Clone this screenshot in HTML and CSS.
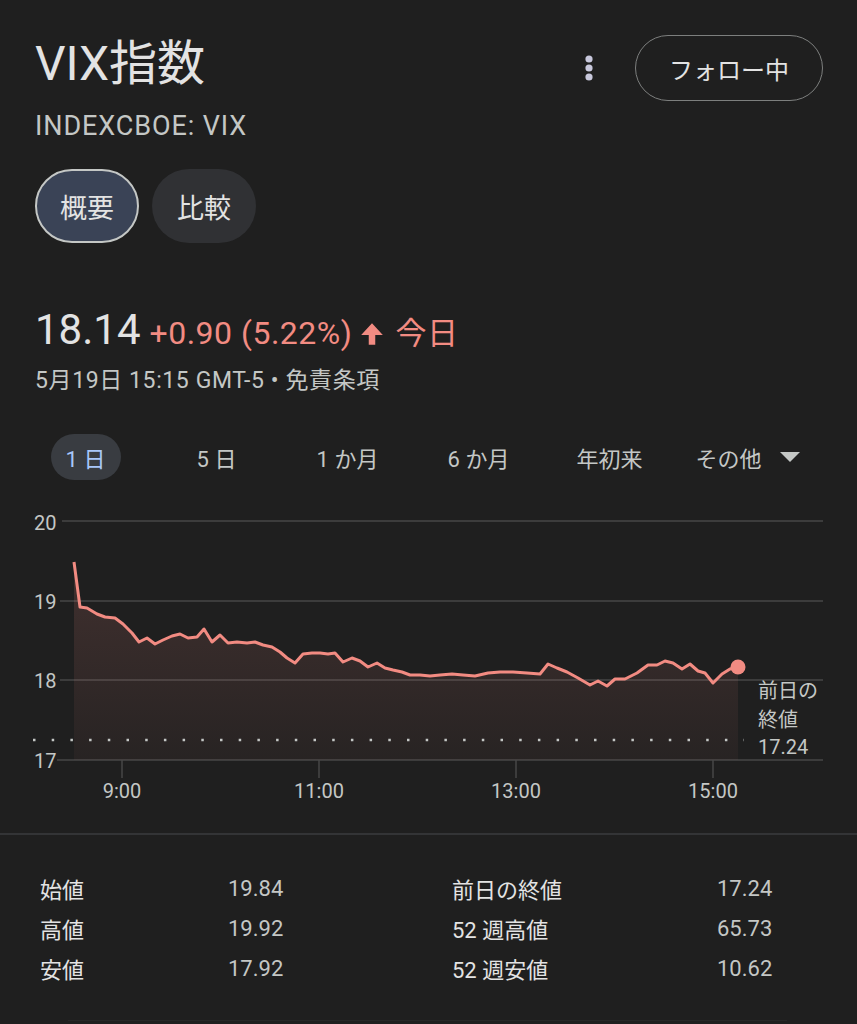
FILE: index.html
```html
<!DOCTYPE html>
<html lang="ja">

<head>
    <meta charset="UTF-8">
    <meta name="viewport" content="width=device-width, initial-scale=1.0">
    <title>VIX指数</title>
    <link rel="stylesheet" href="styles.css">
</head>

<body>
    <header class="quote-head">
        <div class="top-row">
            <h1>VIX指数</h1>
            <div class="actions">
                <button class="more" aria-label="その他のオプション">
                    <svg width="8" height="26" viewBox="0 0 8 26">
                        <circle cx="4" cy="4" r="3.6" />
                        <circle cx="4" cy="13" r="3.6" />
                        <circle cx="4" cy="22" r="3.6" />
                    </svg>
                </button>
                <button class="follow">フォロー中</button>
            </div>
        </div>
        <p class="ticker">INDEXCBOE: VIX</p>
        <div class="chips">
            <button class="chip chip-active">概要</button>
            <button class="chip">比較</button>
        </div>

        <div class="price-row">
            <span class="price">18.14</span>
            <span class="change">+0.90 (5.22%)</span>
            <svg class="up-arrow" width="26" height="26" viewBox="0 0 24 24">
                <path d="M12 2 L22 13 L15 13 L15 22 L9 22 L9 13 L2 13 Z" />
            </svg>
            <span class="change today">今日</span>
        </div>
        <p class="timestamp">5月19日 15:15 GMT-5 • 免責条項</p>
    </header>

    <nav class="ranges">
        <span class="range"><span class="range-pill">1 日</span></span>
        <span class="range">5 日</span>
        <span class="range">1 か月</span>
        <span class="range">6 か月</span>
        <span class="range">年初来</span>
        <span class="range range-more">その他
            <svg width="20" height="12" viewBox="0 0 20 12"><path d="M0 1 L20 1 L10 11 Z" /></svg>
        </span>
    </nav>

    <div class="chart">
        <svg width="857" height="300" viewBox="0 505 857 300">
            <defs>
                <linearGradient id="area" gradientUnits="userSpaceOnUse" x1="0" y1="560" x2="0" y2="759">
                    <stop offset="0" stop-color="#f28b82" stop-opacity="0.16" />
                    <stop offset="1" stop-color="#f28b82" stop-opacity="0.04" />
                </linearGradient>
            </defs>

            <g class="grid">
                <line x1="62" y1="520" x2="823" y2="520" />
                <line x1="60" y1="600" x2="823" y2="600" />
                <line x1="60" y1="679" x2="823" y2="679" />
                <line x1="57" y1="759" x2="823" y2="759" />
                <line x1="122" y1="759" x2="122" y2="777" />
                <line x1="319" y1="759" x2="319" y2="777" />
                <line x1="516" y1="759" x2="516" y2="777" />
                <line x1="713" y1="759" x2="713" y2="777" />
            </g>

            <g class="axis-text">
                <text x="34" y="529">20</text>
                <text x="34" y="608">19</text>
                <text x="34" y="687">18</text>
                <text x="34" y="767">17</text>
                <text x="122" y="797" text-anchor="middle">9:00</text>
                <text x="319" y="797" text-anchor="middle">11:00</text>
                <text x="516" y="797" text-anchor="middle">13:00</text>
                <text x="713" y="797" text-anchor="middle">15:00</text>
            </g>

            <path class="area" fill="url(#area)" d="M74,561 L80,606 L87,607 L97,613 L105,616 L115,617 L123,623 L132,632 L139,641 L147,637 L155,643 L163,639 L172,635 L180,633 L188,637 L197,636 L204,628 L212,641 L220,634 L228,642 L237,641 L247,642 L255,641 L263,644 L272,646 L280,651 L287,657 L295,662 L303,653 L312,652 L320,652 L328,653 L335,652 L343,661 L352,657 L360,660 L368,666 L377,662 L385,667 L393,669 L402,671 L410,674 L420,674 L430,675 L440,674 L452,673 L463,674 L475,675 L488,672 L500,671 L513,671 L527,672 L540,673 L548,663 L557,667 L567,671 L578,677 L590,684 L598,680 L607,685 L615,678 L625,678 L637,672 L648,664 L657,664 L665,660 L673,662 L682,668 L690,663 L698,670 L705,672 L713,682 L722,673 L730,668 L738,666 L738,759 L74,759 Z" />

            <line class="prev-close" x1="33" y1="739" x2="752" y2="739" />

            <rect class="label-bg" x="744" y="680" width="90" height="78" />
            <g class="axis-text">
                <text x="758" y="697">前日の</text>
                <text x="758" y="726">終値</text>
                <text x="758" y="753">17.24</text>
            </g>

            <path class="line" d="M74,561 L80,606 L87,607 L97,613 L105,616 L115,617 L123,623 L132,632 L139,641 L147,637 L155,643 L163,639 L172,635 L180,633 L188,637 L197,636 L204,628 L212,641 L220,634 L228,642 L237,641 L247,642 L255,641 L263,644 L272,646 L280,651 L287,657 L295,662 L303,653 L312,652 L320,652 L328,653 L335,652 L343,661 L352,657 L360,660 L368,666 L377,662 L385,667 L393,669 L402,671 L410,674 L420,674 L430,675 L440,674 L452,673 L463,674 L475,675 L488,672 L500,671 L513,671 L527,672 L540,673 L548,663 L557,667 L567,671 L578,677 L590,684 L598,680 L607,685 L615,678 L625,678 L637,672 L648,664 L657,664 L665,660 L673,662 L682,668 L690,663 L698,670 L705,672 L713,682 L722,673 L730,668 L738,666" />
            <circle class="last-point" cx="738" cy="666" r="7.5" />
        </svg>
    </div>

    <div class="divider"></div>

    <section class="stats">
        <span class="stat-label">始値</span>
        <span class="stat-value">19.84</span>
        <span class="stat-label">前日の終値</span>
        <span class="stat-value">17.24</span>

        <span class="stat-label">高値</span>
        <span class="stat-value">19.92</span>
        <span class="stat-label">52 週高値</span>
        <span class="stat-value">65.73</span>

        <span class="stat-label">安値</span>
        <span class="stat-value">17.92</span>
        <span class="stat-label">52 週安値</span>
        <span class="stat-value">10.62</span>
    </section>

    <div class="bottom-edge"></div>
</body>

</html>
```

FILE: styles.css
```css
body {
    margin: 0;
    background: #1f1f1f;
    color: #e3e3e3;
    font-family: Roboto, "Noto Sans CJK JP", sans-serif;
}

button {
    font-family: inherit;
    cursor: pointer;
}

.quote-head {
    padding: 35px 34px 0 35px;
}

.top-row {
    display: flex;
    justify-content: space-between;
    align-items: flex-start;
}

h1 {
    margin: 0;
    font-size: 48px;
    font-weight: 400;
    line-height: 58px;
}

.actions {
    display: flex;
    align-items: center;
    gap: 42px;
}

.more {
    background: none;
    border: none;
    padding: 0;
    display: flex;
}

.more svg {
    fill: #c8c8dc;
}

.follow {
    height: 66px;
    padding: 0 33px;
    border: 1.5px solid #7d7f7e;
    border-radius: 33px;
    background: transparent;
    color: #e3e3e3;
    font-size: 24px;
}

.ticker {
    margin: 10px 0 0;
    font-size: 27px;
    letter-spacing: 0.9px;
    line-height: 31px;
    color: #c4c7c5;
}

.chips {
    display: flex;
    gap: 13px;
    margin-top: 27px;
}

.chip {
    height: 74px;
    padding: 0 25px;
    border: none;
    border-radius: 37px;
    background: #303134;
    color: #e3e3e3;
    font-size: 27px;
}

.chip-active {
    background: #3a4356;
    border: 2px solid #c4c7c5;
    padding: 0 23px;
}

.price-row {
    display: flex;
    align-items: baseline;
    margin-top: 62px;
    line-height: 50px;
}

.price {
    font-size: 42px;
    color: #e3e3e3;
}

.change {
    margin-left: 9px;
    font-size: 32px;
    letter-spacing: 0.5px;
    color: #f28b82;
}

.up-arrow {
    fill: #f28b82;
    margin-left: 7px;
    align-self: center;
    position: relative;
    top: 2px;
}

.today {
    margin-left: 10px;
    font-size: 31px;
}

.timestamp {
    margin: 8px 0 0;
    font-size: 23px;
    letter-spacing: 0.6px;
    line-height: 28px;
    color: #c4c7c5;
}

.ranges {
    display: grid;
    grid-template-columns: repeat(6, 131px);
    padding-left: 20px;
    margin-top: 39px;
    height: 46px;
    align-items: center;
}

.range {
    display: flex;
    justify-content: center;
    align-items: center;
    font-size: 22px;
    color: #c4c7c5;
}

.range-pill {
    display: flex;
    align-items: center;
    justify-content: center;
    width: 70px;
    height: 46px;
    border-radius: 23px;
    background: #393c41;
    color: #a8c7fa;
}

.range-more {
    gap: 18px;
    padding-left: 14px;
}

.range-more svg {
    fill: #c4c7c5;
}

.chart {
    margin-top: 26px;
    height: 300px;
}

.chart svg {
    display: block;
}

.grid line {
    stroke: #474747;
    stroke-width: 1.5;
}

.axis-text text {
    font-family: Roboto, "Noto Sans CJK JP", sans-serif;
    font-size: 20px;
    fill: #c4c7c5;
}

.line {
    fill: none;
    stroke: #f28b82;
    stroke-width: 3;
    stroke-linejoin: round;
}

.last-point {
    fill: #f28b82;
}

.prev-close {
    stroke: #c4c7c5;
    stroke-width: 2.5;
    stroke-dasharray: 2.5 16.2;
}

.label-bg {
    fill: #1f1f1f;
}

.divider {
    margin-top: 27px;
    height: 2px;
    background: #333436;
}

.stats {
    display: grid;
    grid-template-columns: 188px 224px 265px auto;
    grid-auto-rows: 40px;
    align-items: center;
    padding: 33px 0 0 40px;
    font-size: 22px;
}

.stat-label {
    color: #e3e3e3;
}

.stat-value {
    color: #c4c7c5;
}

.bottom-edge {
    margin: 32px 70px 0 68px;
    height: 1px;
    background: #272727;
}
```
